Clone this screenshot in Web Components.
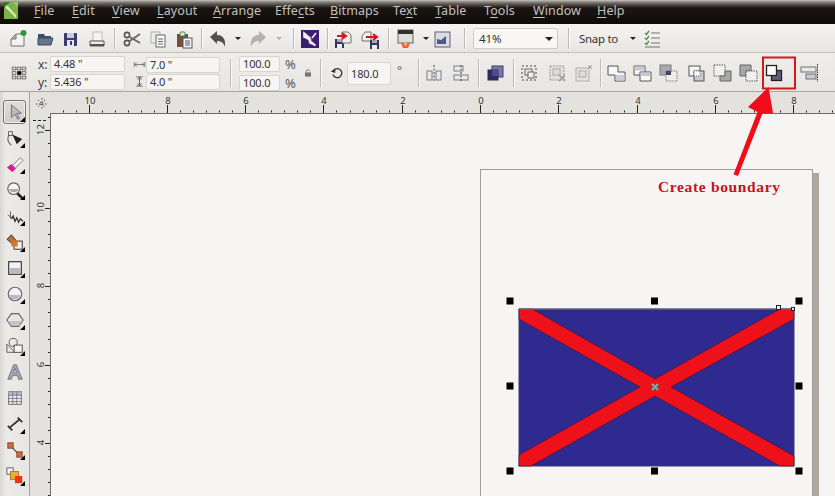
<!DOCTYPE html>
<html>
<head>
<meta charset="utf-8">
<title>CorelDRAW</title>
<style>
  html, body { margin: 0; padding: 0; width: 835px; height: 496px; overflow: hidden; background: #f6f5f4; }
  body { font-family: "Noto Sans", "Liberation Sans", sans-serif; }
</style>
</head>
<body>
<cdr-app>
  <cdr-menubar>
    <cdr-menu key="F" rest="ile" w="38"></cdr-menu>
    <cdr-menu key="E" rest="dit" w="40"></cdr-menu>
    <cdr-menu key="V" rest="iew" w="45"></cdr-menu>
    <cdr-menu key="L" rest="ayout" w="56"></cdr-menu>
    <cdr-menu key="A" rest="rrange" w="62"></cdr-menu>
    <cdr-menu pre="Effe" key="c" rest="ts" w="55"></cdr-menu>
    <cdr-menu key="B" rest="itmaps" w="63"></cdr-menu>
    <cdr-menu pre="Te" key="x" rest="t" w="42"></cdr-menu>
    <cdr-menu key="T" rest="able" w="49"></cdr-menu>
    <cdr-menu pre="T" key="o" rest="ols" w="49"></cdr-menu>
    <cdr-menu key="W" rest="indow" w="64"></cdr-menu>
    <cdr-menu key="H" rest="elp" w="30"></cdr-menu>
  </cdr-menubar>

  <cdr-toolbar>
    <cdr-icon name="new" w="26"></cdr-icon>
    <cdr-icon name="open" w="27"></cdr-icon>
    <cdr-icon name="save" w="26"></cdr-icon>
    <cdr-icon name="print" w="26"></cdr-icon>
    <cdr-sep style="margin:0 4px 0 4px"></cdr-sep>
    <cdr-icon name="cut" w="26"></cdr-icon>
    <cdr-icon name="copy" w="26"></cdr-icon>
    <cdr-icon name="paste" w="26"></cdr-icon>
    <cdr-sep style="margin:0 3px 0 4px"></cdr-sep>
    <cdr-icon name="undo" w="26"></cdr-icon>
    <cdr-drop style="margin-left:1px"></cdr-drop>
    <cdr-icon name="redo" w="26" style="margin-left:1px"></cdr-icon>
    <cdr-drop light style="margin-left:2px"></cdr-drop>
    <cdr-sep style="margin:0 3px 0 8px"></cdr-sep>
    <cdr-icon name="app" w="26"></cdr-icon>
    <cdr-sep style="margin:0 2px 0 4px"></cdr-sep>
    <cdr-icon name="import" w="26"></cdr-icon>
    <cdr-icon name="export" w="26" style="margin-left:1px"></cdr-icon>
    <cdr-sep style="margin:0 3px 0 5px"></cdr-sep>
    <cdr-icon name="launch" w="26"></cdr-icon>
    <cdr-drop style="margin-left:2px"></cdr-drop>
    <cdr-icon name="screen" w="22" style="margin-left:-1px"></cdr-icon>
    <cdr-sep style="margin:0 8px 0 11px"></cdr-sep>
    <cdr-combo value="41%"></cdr-combo>
    <cdr-sep style="margin:0 10px 0 10px"></cdr-sep>
    <cdr-label>Snap to</cdr-label>
    <cdr-drop style="margin-left:10px"></cdr-drop>
    <cdr-icon name="snap" w="20" style="margin-left:3px"></cdr-icon>
  </cdr-toolbar>

  <cdr-propbar>
    <cdr-icon name="origin" w="18" h="20" style="margin-left:10px"></cdr-icon>
    <cdr-fields style="margin-left:10px">
      <cdr-field label="x:" value="4.48 &quot;" w="75"></cdr-field>
      <cdr-field label="y:" value="5.436 &quot;" w="75"></cdr-field>
    </cdr-fields>
    <cdr-fields style="margin-left:8px">
      <cdr-field icon="hsize" value="7.0 &quot;" w="74"></cdr-field>
      <cdr-field icon="vsize" value="4.0 &quot;" w="74"></cdr-field>
    </cdr-fields>
    <cdr-sep tall style="margin:0 8px 0 10px"></cdr-sep>
    <cdr-fields>
      <cdr-field value="100.0" w="41" unit="%"></cdr-field>
      <cdr-field value="100.0" w="41" unit="%"></cdr-field>
    </cdr-fields>
    <cdr-icon name="lock" w="12" style="margin-left:7px"></cdr-icon>
    <cdr-sep tall style="margin:0 9px 0 6px"></cdr-sep>
    <cdr-icon name="rotate" w="15"></cdr-icon>
    <cdr-field value="180.0" w="44" style="margin-left:2px"></cdr-field>
    <cdr-label style="margin:-8px 0 0 6px;width:7px;color:#555">°</cdr-label>
    <cdr-sep tall style="margin:0 2px 0 14px"></cdr-sep>
    <cdr-icon name="alignh" w="26"></cdr-icon>
    <cdr-icon name="alignv" w="26" style="margin-left:1px"></cdr-icon>
    <cdr-sep tall style="margin:0 3px 0 4px"></cdr-sep>
    <cdr-icon name="order" w="26" style="margin-right:1px"></cdr-icon>
    <cdr-sep tall style="margin:0 2px 0 4px"></cdr-sep>
    <cdr-icon name="group" w="26" style="margin-right:2px"></cdr-icon>
    <cdr-icon name="ungroup" w="26"></cdr-icon>
    <cdr-icon name="ungroupall" w="26" style="margin-right:2px"></cdr-icon>
    <cdr-sep tall style="margin:0 2px 0 2px"></cdr-sep>
    <cdr-icon name="weld" w="26"></cdr-icon>
    <cdr-icon name="trim" w="26"></cdr-icon>
    <cdr-icon name="intersect" w="26"></cdr-icon>
    <cdr-icon name="simplify" w="26" style="margin-left:2px"></cdr-icon>
    <cdr-icon name="frontback" w="26"></cdr-icon>
    <cdr-icon name="backfront" w="26"></cdr-icon>
    <cdr-icon name="boundary" w="26"></cdr-icon>
    <cdr-icon name="alignbar" w="26" style="margin-left:9px"></cdr-icon>
  </cdr-propbar>

  <cdr-workspace>
    <cdr-toolbox slot="tools">
      <cdr-tool name="pick" active fly></cdr-tool>
      <cdr-tool name="shape" fly></cdr-tool>
      <cdr-tool name="smear" fly></cdr-tool>
      <cdr-tool name="zoom" fly></cdr-tool>
      <cdr-tool name="free" fly></cdr-tool>
      <cdr-tool name="smart" fly></cdr-tool>
      <cdr-tool name="rect" fly></cdr-tool>
      <cdr-tool name="ellipse" fly></cdr-tool>
      <cdr-tool name="poly" fly></cdr-tool>
      <cdr-tool name="basic" fly></cdr-tool>
      <cdr-tool name="text"></cdr-tool>
      <cdr-tool name="table"></cdr-tool>
      <cdr-tool name="dim" fly></cdr-tool>
      <cdr-tool name="conn" fly></cdr-tool>
      <cdr-tool name="fill" fly></cdr-tool>
    </cdr-toolbox>
    <cdr-canvas slot="canvas"></cdr-canvas>
  </cdr-workspace>
</cdr-app>

<script>
const S = (inner) => `<svg xmlns="http://www.w3.org/2000/svg" viewBox="0 0 20 20" width="20" height="20" style="display:block">${inner}</svg>`;

const floppy = (x, y) => `<rect x="${x}" y="${y}" width="9" height="9" fill="#34365c"/><rect x="${x+2}" y="${y}" width="5" height="3" fill="#aab"/><rect x="${x+2}" y="${y+5}" width="5" height="4" fill="#eee"/>`;

const ICONS = {
  new: `<path d="M3 10 8 5h8v12H3z" fill="#f4f3f1" stroke="#77746f"/><path d="M3 10h5V5z" fill="#bdbab5" stroke="#77746f"/><circle cx="15.500" cy="4" r="3" fill="#2f9a3a"/>`,
  open: `<path d="M3 5h6l1 2h6v3H3z" fill="#3d4d66"/><path d="M3 16V9h15l-2 7z" fill="#66758c" stroke="#3d4d66"/>`,
  save: `<rect x="3" y="4" width="13" height="13" rx="1" fill="#3a3c70"/><rect x="6" y="4" width="7" height="5" fill="#c9cbdc"/><rect x="6" y="11" width="7" height="6" fill="#e9e9ee"/><rect x="9" y="12" width="2" height="4" fill="#3a3c70"/>`,
  print: `<rect x="6" y="3" width="9" height="9" fill="#f5f5ee" stroke="#b5c0b5"/><path d="M3 12h14v5H3z" fill="#efeee8" stroke="#555"/><rect x="3" y="15" width="14" height="2" fill="#555"/>`,
  cut: `<circle cx="5" cy="6" r="2.600" fill="none" stroke="#555" stroke-width="1.600"/><circle cx="5" cy="14" r="2.600" fill="none" stroke="#555" stroke-width="1.600"/><path d="M7 7.500 18 14M7 12.500 18 5" stroke="#6a6a6a" stroke-width="2"/>`,
  copy: `<rect x="3" y="3" width="9" height="11" fill="#e8eee8" stroke="#a9b3ab"/><rect x="8" y="6" width="9" height="12" fill="#f7f7f5" stroke="#64686e"/><path d="M10 10h5M10 12.500h5M10 15h5" stroke="#64686e"/>`,
  paste: `<rect x="3" y="5" width="11" height="13" fill="#75503a"/><rect x="6" y="3" width="5" height="4" rx="1" fill="#eee" stroke="#3d8a45"/><rect x="9" y="9" width="9" height="10" fill="#f7f7f5" stroke="#55585e"/><path d="M11 12h5M11 14h5M11 16h5" stroke="#55585e"/>`,
  undo: `<path d="M2 8 9 2v4c5 0 9 3 8 12-1-4-4-6-8-6v3z" fill="#55504e"/>`,
  redo: `<path d="M18 8 11 2v4C6 6 2 9 3 18c1-4 4-6 8-6v3z" fill="#b5b2ae"/>`,
  app: `<rect x="1" y="1" width="18" height="18" fill="#3e1c70"/><path d="M4 4l6 5-1.500 1.500 7 6-6-3 1-2.500L4 8zM16 4l-4 5" stroke="#eee" stroke-width="1.700" fill="#eee"/>`,
  import: `${floppy(2, 10)}<path d="M9 3h6l3 3v8H9z" fill="#efeeeb" stroke="#70706c"/><path d="M4 7h8M9 4l4 3-4 3" stroke="#d3121b" stroke-width="2" fill="none"/>`,
  export: `<path d="M2 7l3-4h6v9H2z" fill="#efeeeb" stroke="#70706c"/>${floppy(10, 11)}<path d="M6 8h10M13 5l4 3-4 3" stroke="#d3121b" stroke-width="2" fill="none"/>`,
  launch: `<rect x="3" y="1" width="15" height="13" fill="#dfddda" stroke="#666"/><rect x="3" y="1" width="15" height="4" fill="#33302f"/><path d="M6 14h9l-2 5h-5z" fill="#f2622a"/><path d="M9 14h3l-1 3h-1z" fill="#fad34c"/>`,
  screen: `<rect x="3" y="3" width="15" height="15" fill="#dcdde4" stroke="#5d6078"/><path d="M5 15V10l4 1 5-4v8z" fill="#4a5c88"/>`,
  snap: `<path d="M3 4l1.500 1.500L7 2M3 9l1.500 1.500L7 7M3 14l1.500 1.500L7 12" fill="none" stroke="#4a8a50" stroke-width="1.300"/><path d="M9 4h9M9 9h9M9 14h9M3 18h15" stroke="#6f746e"/>`,
  origin: `<g fill="none" stroke="#666"><rect x="2.500" y="3.500" width="4" height="3"/><rect x="8" y="3.500" width="4" height="3"/><rect x="13.500" y="3.500" width="4" height="3"/><rect x="2.500" y="8.500" width="4" height="3"/><rect x="13.500" y="8.500" width="4" height="3"/><rect x="2.500" y="13.500" width="4" height="3"/><rect x="8" y="13.500" width="4" height="3"/><rect x="13.500" y="13.500" width="4" height="3"/></g><rect x="8" y="8" width="4.500" height="4" fill="#000"/>`,
  hsize: `<path d="M2 6v8M18 6v8M3 10h14M6 7l-3 3 3 3M14 7l3 3-3 3" stroke="#4a4a58" fill="none"/>`,
  vsize: `<path d="M5 3h10M5 17h10M10 4v12M7 7l3-3 3 3M7 13l3 3 3-3" stroke="#4a4a58" stroke-width="1.300" fill="none"/>`,
  lock: `<rect x="5" y="9" width="10" height="7" fill="#77757a"/><path d="M7 9V7c0-3 6-3 6 0" stroke="#77757a" stroke-width="1.500" fill="none"/>`,
  rotate: `<path d="M5 6.500A6 6 0 1 1 4 12" stroke="#333" stroke-width="1.700" fill="none"/><path d="M1 8l6 2V4z" fill="#333"/>`,
  alignh: `<g fill="none" stroke="#7a7f8a"><rect x="3" y="8" width="5" height="9"/><rect x="12" y="8" width="5" height="9"/></g><path d="M10 2v17" stroke="#444" stroke-dasharray="2 1.500"/>`,
  alignv: `<g fill="none" stroke="#7a7f8a"><rect x="3" y="3" width="9" height="5"/><rect x="3" y="12" width="14" height="5"/></g><path d="M10 2v17" stroke="#444" stroke-dasharray="2 1.500"/>`,
  order: `<rect x="7" y="3" width="11" height="11" fill="#7a78a8" stroke="#3c3a6e"/><rect x="3" y="7" width="10" height="10" fill="#2d2b60" stroke="#2d2b60"/><rect x="7" y="7" width="6" height="6" fill="#4e4c86"/>`,
  group: `<rect x="3" y="3" width="14" height="14" fill="none" stroke="#444" stroke-dasharray="2 2"/><rect x="6" y="6" width="7" height="6" fill="#eee" stroke="#666"/><rect x="9" y="9" width="6" height="6" fill="#eee" stroke="#666"/>`,
  ungroup: `<rect x="3" y="3" width="14" height="14" fill="#e0dfdc" stroke="#9c9c98" stroke-dasharray="2 1"/><rect x="6" y="6" width="7" height="6" fill="#ddd" stroke="#aaa"/><path d="M12 12l6 6M18 12l-6 6" stroke="#999" stroke-width="1.300"/>`,
  ungroupall: `<rect x="3" y="5" width="13" height="13" fill="#e4e3df" stroke="#b0b0ac"/><rect x="6" y="8" width="7" height="6" fill="#ddd" stroke="#aaa"/><path d="M15 2l4 4M19 2l-4 4" stroke="#999"/>`,
  weld: `<path d="M2 3h10v6h7v9H9v-6H2z" fill="#f7f7f7" stroke="#555"/><path d="M10 12h8.500v5.500H10z" fill="#ccccd8"/>`,
  trim: `<path d="M2 3h11v9H2z" fill="#f7f7f7" stroke="#555"/><path d="M2.500 3.500h10v4h-10z" fill="#c8c8d4"/><path d="M8 9h11v9H8z" fill="#f7f7f7" stroke="#555"/><path d="M8.500 9.500h10v3.500h-10z" fill="#c8c8d4"/>`,
  intersect: `<rect x="2" y="2" width="11" height="10" fill="#a9a9ae" stroke="#77777c"/><rect x="8" y="8" width="11" height="10" fill="#eee" stroke="#777" stroke-dasharray="1.500 1"/><rect x="8" y="8" width="5" height="4" fill="#44445c"/>`,
  simplify: `<rect x="3" y="3" width="11" height="10" fill="#f5f5f5" stroke="#555"/><rect x="8" y="8" width="10" height="10" fill="#c9c9d2" stroke="#555"/><rect x="8" y="8" width="6" height="5" fill="#fff" stroke="#777" stroke-dasharray="1 1"/>`,
  frontback: `<rect x="2" y="2" width="11" height="11" fill="#f0f0ee" stroke="#555" stroke-dasharray="1.500 1"/><path d="M13 8h6v10H8v-5h5z" fill="#a7a7ac" stroke="#666"/>`,
  backfront: `<path d="M2 2h11v6H8v5H2z" fill="#a7a7ac" stroke="#666"/><rect x="8" y="8" width="11" height="10" fill="#f0f0ee" stroke="#555" stroke-dasharray="1.500 1"/>`,
  boundary: `<rect x="7.500" y="7.500" width="10" height="10" fill="#5e5e78" stroke="#222" stroke-width="1.300"/><rect x="2.500" y="2.500" width="10" height="10" fill="#fafafa" stroke="#222" stroke-width="1.300"/>`,
  alignbar: `<rect x="2" y="4" width="15" height="5" fill="#e8e8e6" stroke="#6e7077"/><rect x="7" y="11" width="10" height="5" fill="#c8c9cc" stroke="#6e7077"/><path d="M18.500 1v18" stroke="#333" stroke-dasharray="1.500 1"/>`,
  pick: `<path d="M6 2v14l4-3.500 3 5.500 2-1-3-5.500h5z" fill="#bcbcc4" stroke="#6a6a72"/>`,
  shape: `<path d="M4 5c-3 5-2 10 2 13" stroke="#75757a" fill="none" stroke-width="1.300"/><rect x="3" y="3" width="4" height="4" fill="#fff" stroke="#444"/><path d="M7 6l11 5-6 6z" fill="#222"/>`,
  smear: `<path d="M7 12 16 3l3 3-9 9z" fill="#f2f2f0" stroke="#77777a"/><path d="M1 14l5-4 5 5-4 4z" fill="#d81d93"/>`,
  zoom: `<path d="M12 13l6 6" stroke="#222" stroke-width="3"/><circle cx="8.500" cy="8.500" r="6.500" fill="#f4f4f4" stroke="#66666a" stroke-width="1.300"/><path d="M3 9a6 6 0 0 0 11 0z" fill="#a9a9af"/>`,
  free: `<path d="M2 9l6 4M5 5v8" stroke="#555" stroke-width="1"/><path d="M6 13l2-3 2 6 2-4 2 5 2-4 3 3" stroke="#333" stroke-width="1.400" fill="none"/>`,
  smart: `<path d="M1 7l5-5 5 6-4 4z" fill="#b5743c" stroke="#333"/><rect x="9" y="9" width="9" height="9" fill="#f2f2f2" stroke="#222"/><rect x="6" y="8" width="7" height="7" fill="#d5772c"/>`,
  rect: `<rect x="3" y="3" width="14" height="14" fill="#f3f3f3" stroke="#33333a" stroke-width="1.300"/><rect x="4" y="10" width="12" height="6.500" fill="#b9b9c2"/>`,
  ellipse: `<circle cx="10" cy="10" r="7.500" fill="#f3f3f3" stroke="#66666c" stroke-width="1.300"/><path d="M3 11a7.500 7.500 0 0 0 14 0z" fill="#b9b9c2"/>`,
  poly: `<path d="M6 3h8l5 7-5 7H6l-5-7z" fill="#e6e6e8" stroke="#66666c" stroke-width="1.300"/><path d="M2 11h16l-4 5.500H6z" fill="#c2c2c8"/>`,
  basic: `<circle cx="8" cy="6" r="4.500" fill="#e9e9ec" stroke="#555"/><path d="M1 8l9 9H1z" fill="#e9e9ec" stroke="#555"/><rect x="9" y="9" width="9" height="8" fill="#f6f6f6" stroke="#444"/>`,
  text: `<path d="M2 18 8.500 2h3L18 18h-4l-1.300-4H7.300L6 18zM8.200 11h3.600L10 6z" fill="#a5a7b6" stroke="#5b5d70" stroke-width=".8"/>`,
  table: `<rect x="3" y="3" width="14" height="14" fill="#eeeef2" stroke="#666"/><rect x="3" y="3" width="14" height="3.500" fill="#b4b4c0"/><path d="M3 7h14M3 10.500h14M3 14h14M7.500 3v14M12 3v14" stroke="#77777f"/>`,
  dim: `<path d="M4 14 15 5" stroke="#333" stroke-width="2"/><path d="M2 12l5 5M13 3l5 5" stroke="#333" stroke-width="2"/>`,
  conn: `<path d="M5 5l10 11" stroke="#555" stroke-width="1.300"/><rect x="2" y="2" width="6" height="6" fill="#c9702a" stroke="#844"/><rect x="12" y="12" width="6" height="6" fill="#c9702a" stroke="#844"/>`,
  fill: `<rect x="1" y="1" width="7" height="7" fill="#fafafa" stroke="#555"/><rect x="5" y="5" width="9" height="9" fill="#e8ac35" stroke="#a9792a"/><rect x="10" y="10" width="8" height="8" fill="#e9360e"/>`,
};

function shadow(el, html) {
  el.attachShadow({ mode: 'open' }).innerHTML = html;
}

class CdrApp extends HTMLElement {
  connectedCallback() {
    shadow(this, `
      <style>
        :host { display: flex; flex-direction: column; position: relative; width: 835px; height: 496px; overflow: hidden; font-family: "Noto Sans", "Liberation Sans", sans-serif; }
        .mark { position: absolute; left: 0; top: 0; pointer-events: none; }
        .note { position: absolute; left: 658px; top: 177px; color: #c9121c; font: bold 15.500px/20px "Liberation Serif", serif; letter-spacing: .65px; white-space: nowrap; }
      </style>
      <slot></slot>
      <svg class="mark" width="835" height="496" viewBox="0 0 835 496">
        <rect x="763" y="57.500" width="32" height="31" fill="none" stroke="#d4161f" stroke-width="2"/>
        <path d="M733.500 174.500 757.500 112 748 107 768.500 87 773 113 762.500 113.500 738 176z" fill="#f00c18"/>
      </svg>
      <div class="note">Create boundary</div>
    `);
  }
}

class CdrMenubar extends HTMLElement {
  connectedCallback() {
    shadow(this, `
      <style>
        :host { display: flex; align-items: center; height: 24px; flex: none; box-sizing: border-box; padding: 0 0 2px 34px; position: relative;
          background: linear-gradient(#c5c2bc 0, #6f6b66 3px, #1a1513 8px, #0e0b0a 100%); }
        svg { position: absolute; left: 4px; top: 2px; }
      </style>
      <svg width="14" height="17" viewBox="0 0 14 17">
        <rect width="14" height="17" fill="#7cb342"/>
        <path d="M2 2l10 11v3L1 5z" fill="#dcebb7"/>
        <path d="M0 0h6L0 6z" fill="#3f7a22"/>
        <path d="M9 0h5v5z" fill="#9cc95c"/>
      </svg>
      <slot></slot>
    `);
  }
}

class CdrMenu extends HTMLElement {
  connectedCallback() {
    const a = (n) => this.getAttribute(n) || '';
    shadow(this, `
      <style>
        :host { display: block; flex: none; width: ${a('w')}px; color: #c4c2bd; font-size: 12.500px; line-height: 18px; letter-spacing: .1px; white-space: nowrap; }
        u { text-underline-offset: 2px; }
      </style>${a('pre')}<u>${a('key')}</u>${a('rest')}
    `);
  }
}

class CdrIcon extends HTMLElement {
  connectedCallback() {
    const w = this.getAttribute('w') || 26;
    const h = this.getAttribute('h') || 20;
    shadow(this, `
      <style>:host { display: flex; flex: none; align-items: center; justify-content: center; width: ${w}px; height: ${h}px; }</style>
      ${S(ICONS[this.getAttribute('name')] || '')}
    `);
  }
}

class CdrSep extends HTMLElement {
  connectedCallback() {
    const tall = this.hasAttribute('tall');
    shadow(this, `
      <style>:host { display: block; flex: none; width: 1px; height: ${tall ? 28 : 21}px; background: #bdbab5; box-shadow: 1px 0 0 #fbfaf8; }</style>
    `);
  }
}

class CdrDrop extends HTMLElement {
  connectedCallback() {
    const c = this.hasAttribute('light') ? '#b4b1ad' : '#222';
    shadow(this, `
      <style>
        :host { display: flex; flex: none; width: 12px; height: 12px; align-items: center; justify-content: center; }
        i { width: 0; height: 0; border: 3px solid transparent; border-top: 3px solid ${c}; border-bottom: 0; }
      </style><i></i>
    `);
  }
}

class CdrToolbar extends HTMLElement {
  connectedCallback() {
    shadow(this, `
      <style>
        :host { display: flex; align-items: center; flex: none; height: 29px; box-sizing: border-box; padding: 1px 0 0 5px;
          background: linear-gradient(#f5f4f2, #e8e6e3); border-bottom: 1px solid #c3c0bb; }
      </style><slot></slot>
    `);
  }
}

class CdrPropbar extends HTMLElement {
  connectedCallback() {
    shadow(this, `
      <style>
        :host { display: flex; align-items: center; flex: none; height: 39px; box-sizing: border-box; padding-top: 2px;
          background: linear-gradient(#eeedea, #e8e6e3); border-bottom: 1px solid #a9a6a1; }
      </style><slot></slot>
    `);
  }
}

class CdrCombo extends HTMLElement {
  connectedCallback() {
    shadow(this, `
      <style>
        :host { display: flex; flex: none; align-items: center; justify-content: space-between; box-sizing: border-box; width: 85px; height: 21px; padding: 0 4px 0 5px;
          background: #f8f7f5; border: 1px solid #cfccc7; border-radius: 2px; font-size: 11.500px; letter-spacing: -.1px; color: #333; }
        i { width: 0; height: 0; border: 4px solid transparent; border-top: 4px solid #222; border-bottom: 0; }
      </style>${this.getAttribute('value')}<i></i>
    `);
  }
}

class CdrLabel extends HTMLElement {
  connectedCallback() {
    shadow(this, `
      <style>:host { display: block; flex: none; width: 38px; font-size: 11.500px; letter-spacing: -.3px; color: #333; white-space: nowrap; }</style><slot></slot>
    `);
  }
}

class CdrFields extends HTMLElement {
  connectedCallback() {
    shadow(this, `
      <style>:host { display: flex; flex: none; flex-direction: column; gap: 1px; }</style><slot></slot>
    `);
  }
}

class CdrField extends HTMLElement {
  connectedCallback() {
    const a = (n) => this.getAttribute(n);
    const lead = a('label') ? `<b>${a('label')}</b>` : a('icon') ? `<span class="ic">${S(ICONS[a('icon')])}</span>` : '';
    const unit = a('unit') ? `<em>${a('unit')}</em>` : '';
    const big = a('value') === '180.0';
    shadow(this, `
      <style>
        :host { display: flex; flex: none; align-items: center; font-size: 11px; letter-spacing: -.15px; color: #333; }
        b { width: 12px; font-weight: 400; color: #3a3a44; font-size: 12px; }
        .ic { display: block; width: 13px; height: 13px; }
        .ic svg { width: 13px; height: 13px; }
        .in { box-sizing: border-box; width: ${a('w')}px; height: ${big ? 23 : 16}px; line-height: 14px; padding: ${big ? '4px' : '0'} 3px 0; background: #f6f5f3; border: 1px solid #d8d5d0; border-radius: 2px; white-space: nowrap; }
        em { font-style: normal; width: 15px; padding-left: 5px; box-sizing: border-box; font-size: 13px; color: #555; }
      </style>${lead}<div class="in">${a('value')}</div>${unit}
    `);
  }
}

class CdrWorkspace extends HTMLElement {
  connectedCallback() {
    shadow(this, `
      <style>
        :host { display: flex; flex: 1; min-height: 0; }
        ::slotted([slot=tools]) { flex: none; }
        ::slotted([slot=canvas]) { flex: 1; }
      </style>
      <slot name="tools"></slot><slot name="canvas"></slot>
    `);
  }
}

class CdrToolbox extends HTMLElement {
  connectedCallback() {
    shadow(this, `
      <style>
        :host { display: flex; flex-direction: column; box-sizing: border-box; width: 30px; padding: 7px 0 0 0; overflow: hidden;
          background: linear-gradient(90deg, #d9d7d4, #eceae7 6px, #e8e6e3); border-right: 1px solid #a6a39e; }
      </style><slot></slot>
    `);
  }
}

class CdrTool extends HTMLElement {
  connectedCallback() {
    const active = this.hasAttribute('active');
    const fly = this.hasAttribute('fly');
    shadow(this, `
      <style>
        :host { display: flex; flex: none; align-items: center; justify-content: center; position: relative; width: 29px; height: 26px; box-sizing: border-box; }
        .b { display: flex; align-items: center; justify-content: center; box-sizing: border-box; width: 23px; height: 24px;
          ${active ? 'border: 1px solid #77736e; border-radius: 3px; background: linear-gradient(#dfdedc,#cfcdca); box-shadow: inset 0 0 0 1px #f2f1ef;' : ''} }
        .b svg { width: 18px; height: 18px; }
        i { position: absolute; right: 4px; bottom: 3px; width: 0; height: 0; border-style: solid; border-width: 0 0 5px 5px; border-color: transparent transparent #000 transparent; }
      </style>
      <div class="b">${S(ICONS[this.getAttribute('name')] || '')}</div>${fly ? '<i></i>' : ''}
    `);
  }
}

// ruler scale: one inch on the page is 39.14px, zero is at x=480 / y=599.5
class CdrCanvas extends HTMLElement {
  connectedCallback() {
    const OX = 480 - 50, UNIT = 39.14, OY = 599.5 - 113;
    let top = '', side = '';
    for (let v = -11; v <= 9; v++) {
      const x = OX + v * UNIT;
      for (let k = 0; k < 3; k++) {
        const mx = Math.round(x + k * UNIT / 3) + .5;
        if (k === 0 && v % 2 === 0) continue;
        top += `<path d="M${mx} 18.500v2" stroke="#222"/>`;
      }
      if (v % 2 === 0) {
        const px = Math.round(x) + .5;
        top += `<path d="M${px} 13v8" stroke="#222"/>`;
        if (x > 8) top += `<text x="${px + .5}" y="12" text-anchor="middle">${Math.abs(v)}</text>`;
      }
    }
    for (let v = 3; v <= 13; v++) {
      const y = OY - v * UNIT;
      for (let k = 0; k < 3; k++) {
        const my = Math.round(y + k * UNIT / 3) + .5;
        if (k === 0 && v % 2 === 0) continue;
        side += `<path d="M18 ${my}h2" stroke="#222"/>`;
      }
      if (v % 2 === 0) {
        const py = Math.round(y) + .5;
        side += `<path d="M15 ${py}h5" stroke="#222"/><text text-anchor="middle" transform="translate(14 ${py - 1}) rotate(-90)">${v}</text>`;
      }
    }
    // rectangle at 519,309 - 794,466 in page terms, the cross meets at its centre
    const P = (x, y) => `${x - 50},${y - 113}`;
    const handles = [[510, 301], [654.5, 301], [799, 301], [510, 386], [799, 386], [510, 471], [654.5, 471], [799, 471]]
      .map(([x, y]) => `<rect x="${x - 53.5}" y="${y - 116.5}" width="7" height="7" fill="#000"/>`).join('');
    shadow(this, `
      <style>
        :host { display: grid; grid-template: 21px 1fr / 20px 1fr; min-width: 0; }
        .corner { background: #e4e2df; position: relative; }
        .corner svg { position: absolute; left: 5px; top: 5px; }
        .top, .side { background: #e4e2df; overflow: hidden; }
        .top svg, .side svg { display: block; font: 9.500px "Noto Sans", "Liberation Sans", sans-serif; fill: #333; }
        .draw { position: relative; overflow: hidden; background: #f6f5f4; box-shadow: inset 1px 1px 0 #6f6c68; }
        .page { position: absolute; left: 430px; top: 56px; width: 333px; height: 400px; box-sizing: border-box; background: #f6f5f4; border: 1px solid #a19d98; box-shadow: 6px 4px 0 #aea8a1; }
        .art { position: absolute; left: 0; top: 0; }
      </style>
      <div class="corner">
        <svg width="14" height="14" viewBox="0 0 14 14"><path d="M1 7h11M7 1v11M3 3l7 7M10 3l-7 7" stroke="#444" stroke-dasharray="1.500 1.500" fill="none"/></svg>
      </div>
      <div class="top"><svg width="785" height="21">${top}</svg></div>
      <div class="side"><svg width="20" height="383">${side}<path d="M3 7.500h15" stroke="#222" stroke-dasharray="3 2"/></svg></div>
      <div class="draw">
        <div class="page"></div>
        <svg class="art" width="765" height="383">
          <rect x="${519 - 50}" y="${309 - 113}" width="275" height="157" fill="#2e2a8f" stroke="#3b3a62"/>
          <polygon points="${P(519, 309)} ${P(532, 309)} ${P(655, 379)} ${P(780, 309)} ${P(794, 309)} ${P(794, 319)} ${P(671, 387)} ${P(794, 456)} ${P(794, 466)} ${P(780, 466)} ${P(655, 396)} ${P(531, 466)} ${P(519, 466)} ${P(519, 455)} ${P(640, 387)} ${P(519, 319)}" fill="#ef1119" stroke="#4c1030" stroke-width=".6"/>
          <path d="M${519 - 50} ${309 - 113}h275" stroke="#77757c"/>
          <path d="M${652 - 50} ${384 - 113}l6 6M${658 - 50} ${384 - 113}l-6 6" stroke="#4ac3b4" stroke-width="2"/>
          ${handles}
          <rect x="${776 - 50}.500" y="${305 - 113}.500" width="4" height="4" fill="#eee" stroke="#222"/>
          <rect x="${791 - 50}.500" y="${307 - 113}.500" width="3" height="3" fill="#eee" stroke="#222"/>
        </svg>
      </div>
    `);
  }
}

customElements.define('cdr-app', CdrApp);
customElements.define('cdr-menubar', CdrMenubar);
customElements.define('cdr-menu', CdrMenu);
customElements.define('cdr-icon', CdrIcon);
customElements.define('cdr-sep', CdrSep);
customElements.define('cdr-drop', CdrDrop);
customElements.define('cdr-toolbar', CdrToolbar);
customElements.define('cdr-propbar', CdrPropbar);
customElements.define('cdr-combo', CdrCombo);
customElements.define('cdr-label', CdrLabel);
customElements.define('cdr-fields', CdrFields);
customElements.define('cdr-field', CdrField);
customElements.define('cdr-workspace', CdrWorkspace);
customElements.define('cdr-toolbox', CdrToolbox);
customElements.define('cdr-tool', CdrTool);
customElements.define('cdr-canvas', CdrCanvas);
</script>
</body>
</html>
